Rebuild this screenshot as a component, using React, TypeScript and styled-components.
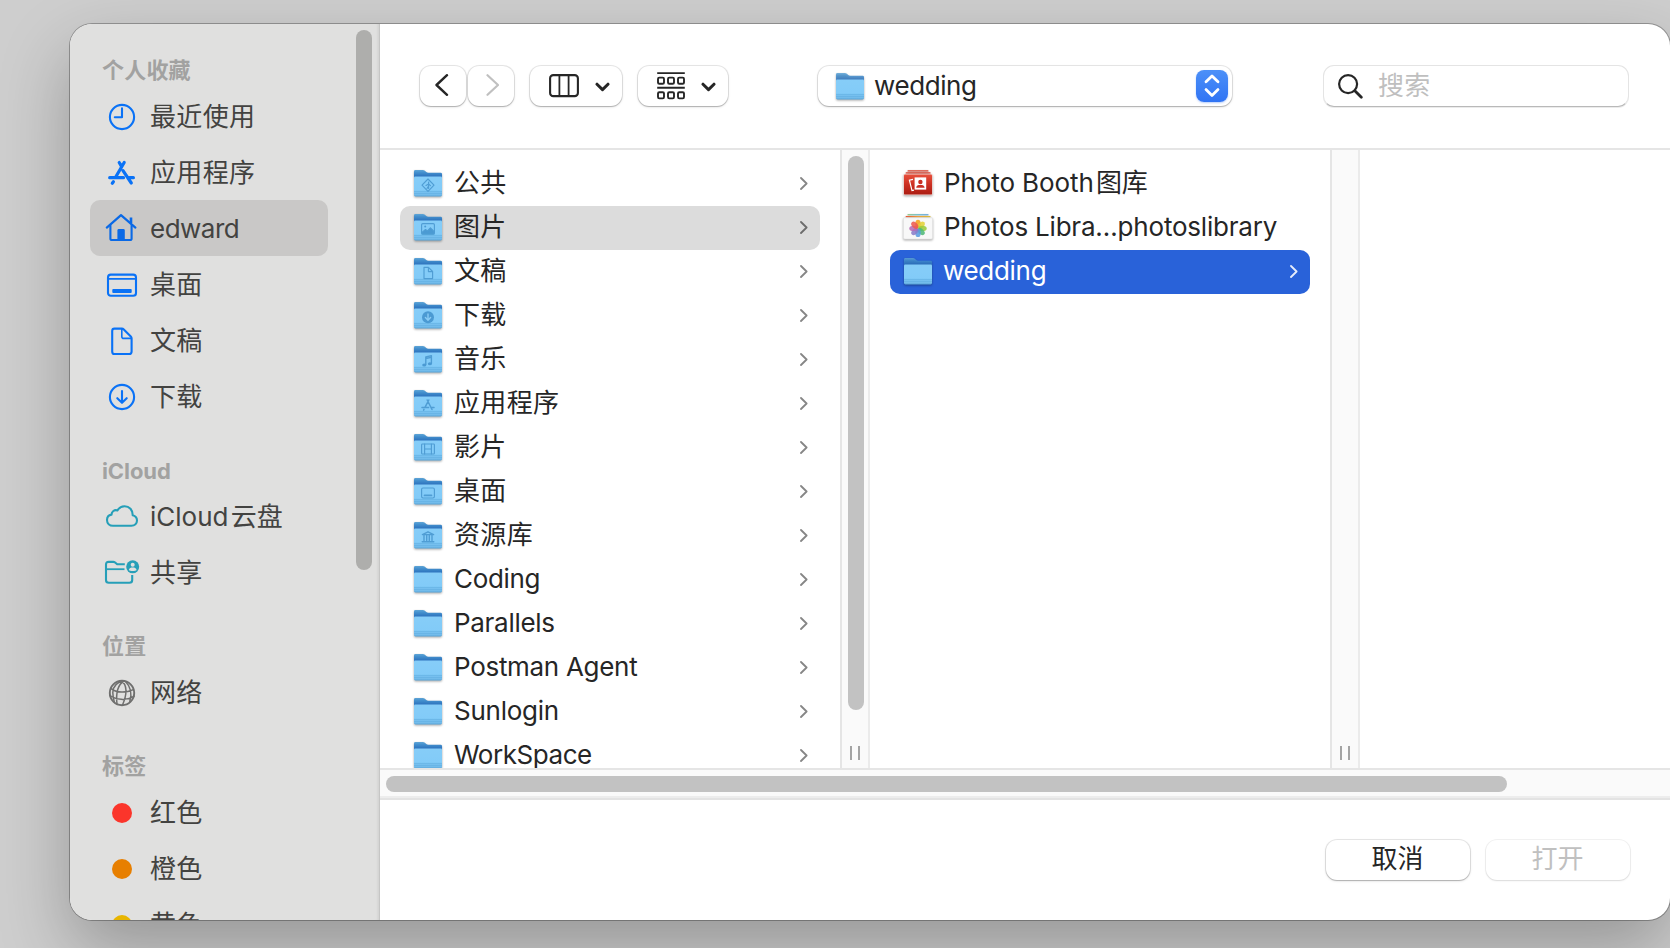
import React from "react";
import styled, { createGlobalStyle } from "styled-components";

const GlobalStyle = createGlobalStyle`
  * { box-sizing: border-box; }
  html, body { margin: 0; padding: 0; height: 948px; overflow: hidden; }
  body {
    background: #cecece;
    font-family: Inter, "Noto Sans CJK SC", sans-serif;
    font-size: 26px;
    color: #262626;
  }
  svg { display: block; flex: none; }
`;

const Desktop = styled.div`
  width: 1670px;
  height: 948px;
  padding: 24px 0 0 70px;
  overflow: hidden;
`;

const Window = styled.div`
  width: 1600px;
  height: 896px;
  display: flex;
  border-radius: 22px;
  overflow: hidden;
  background: #fff;
  box-shadow: 0 0 0 1px rgba(0, 0, 0, 0.28), 0 30px 70px rgba(0, 0, 0, 0.27);
`;

const Sidebar = styled.aside`
  width: 310px;
  flex: none;
  display: flex;
  background: #e0e0df;
  border-right: 1px solid #c6c6c5;
  box-shadow: inset -3px 0 3px -2px rgba(0, 0, 0, 0.08);
`;

const SidebarList = styled.nav`
  width: 286px;
  padding: 0 28px 0 20px;
  overflow: hidden;
`;

const GroupTitle = styled.div<{ $drop?: number }>`
  height: 64px;
  padding: ${(p) => 32 + (p.$drop ?? 0)}px 0 0 12px;
  font-size: 22px;
  line-height: 28px;
  font-weight: 700;
  letter-spacing: ${(p) => (p.$drop ? "-0.1px" : "0.2px")};
  color: #a2a2a1;
  white-space: nowrap;
`;

const SidebarRow = styled.div<{ $active?: boolean }>`
  height: 56px;
  padding: 2px 0 0 14px;
  display: flex;
  align-items: center;
  gap: 10px;
  border-radius: 10px;
  background: ${(p) => (p.$active ? "#c9c8c7" : "transparent")};
  color: #434341;
  white-space: nowrap;
`;

const IconCell = styled.span<{ $color: string }>`
  width: 36px;
  height: 36px;
  color: ${(p) => p.$color};
`;

const TagDot = styled.span<{ $color: string }>`
  width: 20px;
  height: 20px;
  margin: 0 8px;
  border-radius: 50%;
  background: ${(p) => p.$color};
`;

const Label = styled.span<{ $track?: number; $lift?: number }>`
  line-height: 36px;
  white-space: nowrap;
  letter-spacing: ${(p) => p.$track ?? 0.35}px;
  margin-bottom: ${(p) => p.$lift ?? 0}px;
`;

const SidebarThumb = styled.div`
  width: 16px;
  height: 540px;
  margin-top: 6px;
  border-radius: 8px;
  background: #aeaeac;
`;

const Main = styled.main`
  flex: 1;
  min-width: 0;
  display: flex;
  flex-direction: column;
`;

const Toolbar = styled.header`
  height: 126px;
  flex: none;
  padding: 42px 39px 0 40px;
  display: flex;
  align-items: flex-start;
  border-bottom: 2px solid #e5e5e5;
`;

const raised = `
  height: 40px;
  display: flex;
  align-items: center;
  border-radius: 11px;
  background: #fff;
  box-shadow: 0 0 0 1px rgba(0, 0, 0, 0.09), 0 1px 1px rgba(0, 0, 0, 0.16), 0 1px 3px rgba(0, 0, 0, 0.12);
`;

const ToolButton = styled.button<{ $width: number; $after: number }>`
  ${raised}
  border: 0;
  padding: 0 3px 2px 0;
  justify-content: center;
  width: ${(p) => p.$width}px;
  margin-right: ${(p) => p.$after}px;
`;

const ForwardButton = styled(ToolButton)`
  padding: 0 0 2px 1px;
`;

const MenuButton = styled(ToolButton)`
  justify-content: space-between;
  padding: 0 12px 0 19px;
`;

const PathPopup = styled.div`
  ${raised}
  width: 414px;
  margin: 0 91px 0 90px;
  padding: 0 4px 0 18px;
`;

const PopupLabel = styled(Label)`
  flex: 1;
  margin-left: 10px;
`;

const Stepper = styled.span`
  width: 32px;
  height: 32px;
  display: grid;
  place-items: center;
  border-radius: 8px;
  background: linear-gradient(#4c90f8, #3074f4);
  box-shadow: 0 1px 2px rgba(48, 116, 244, 0.35);
`;

const SearchField = styled.div`
  width: 306px;
  height: 42px;
  margin-top: -1px;
  padding-left: 14px;
  display: flex;
  align-items: center;
  gap: 15px;
  border-radius: 11px;
  border: 1px solid #e4e4e4;
  border-bottom-color: #b9b9b9;
  box-shadow: 0 1px 0 rgba(0, 0, 0, 0.08);
  color: #bfbfbf;
`;

const Browser = styled.section`
  height: 618px;
  flex: none;
  display: flex;
  overflow: hidden;
`;

const Column = styled.div`
  width: 460px;
  flex: none;
  padding: 12px 20px 0;
`;

const FileRow = styled.div<{ $state?: "open" | "selected"; $inset: number }>`
  height: 44px;
  padding: 0 12px 2px ${(p) => p.$inset}px;
  display: flex;
  align-items: center;
  border-radius: 10px;
  background: ${(p) =>
    p.$state === "selected" ? "#2962d9" : p.$state === "open" ? "#dcdcdc" : "transparent"};
  color: ${(p) => (p.$state === "selected" ? "#fff" : "inherit")};
`;

const FileName = styled(Label)<{ $gap?: number }>`
  flex: 1;
  margin-left: ${(p) => p.$gap ?? 12}px;
`;

const Gutter = styled.div`
  width: 30px;
  flex: none;
  display: flex;
  flex-direction: column;
  align-items: center;
  justify-content: space-between;
  padding: 6px 0 8px;
  background: #fafafa;
  border-left: 2px solid #e5e5e5;
  border-right: 2px solid #ebebeb;
`;

const GutterThumb = styled.div<{ $visible: boolean }>`
  width: 16px;
  height: 554px;
  margin-left: 2px;
  border-radius: 8px;
  background: ${(p) => (p.$visible ? "#c2c2c2" : "transparent")};
`;

const Grip = styled.div`
  width: 10px;
  height: 14px;
  border: solid #a3a3a3;
  border-width: 0 2px;
`;

const ScrollTrack = styled.div`
  height: 32px;
  flex: none;
  padding: 6px 0 0 6px;
  background: #fafafa;
  border-top: 2px solid #e5e5e5;
  border-bottom: 2px solid #e3e3e3;
  box-shadow: inset 0 -2px 0 #ededed;
`;

const ScrollThumb = styled.div`
  width: 1121px;
  height: 16px;
  border-radius: 8px;
  background: #c2c2c2;
`;

const Footer = styled.footer`
  flex: 1;
  padding: 40px 40px 0;
  display: flex;
  justify-content: flex-end;
  gap: 16px;
`;

const DialogButton = styled.button<{ $dim?: boolean }>`
  ${raised}
  width: 144px;
  border: 0;
  padding: 0 1px 2px 0;
  justify-content: center;
  font: inherit;
  line-height: 36px;
  color: ${(p) => (p.$dim ? "#c0c0c0" : "#262626")};
  ${(p) => p.$dim && "box-shadow: 0 0 0 1px rgba(0,0,0,.05), 0 1px 2px rgba(0,0,0,.1);"}
`;

type IconName =
  | "clock" | "apps" | "home" | "desktop" | "doc" | "down" | "cloud" | "shared" | "globe";

const sidebarGlyphs: Record<IconName, React.ReactNode> = {
  clock: (
    <>
      <circle cx="18" cy="18" r="12.1" />
      <path d="M18 9.4V18.2H10.8" />
    </>
  ),
  apps: (
    <g strokeWidth="3.2">
      <path d="M20.2 7.5L12 21.5M15.2 7.5L17.2 10.8M19 15.6L27.3 28M5.7 22.7H19.5M25.5 22.7H29.4M9.4 26.8L8.3 28.2" />
    </g>
  ),
  home: (
    <>
      <path d="M2.8 16.6L17 4.2L31.4 16.6" strokeWidth="2.2" />
      <path d="M6.4 14.5V27.4Q6.4 29 8 29H26Q27.6 29 27.6 27.4V14.5" />
      <path d="M27 6.4V12" strokeWidth="2.6" strokeLinecap="butt" />
      <path d="M13.4 29V19.4Q13.4 18 14.8 18H19.4Q20.8 18 20.8 19.4V29Z" fill="currentColor" stroke="none" />
    </>
  ),
  desktop: (
    <>
      <rect x="4" y="7.6" width="28" height="21.2" rx="2.8" />
      <path d="M4 11.8H32" strokeWidth="1.8" />
      <rect x="8.3" y="22" width="19.4" height="4" rx="0.9" fill="currentColor" stroke="none" />
    </>
  ),
  doc: (
    <>
      <path d="M10.4 5.6H17.8Q19 5.6 19.8 6.4L26.8 13.4Q27.6 14.2 27.6 15.4V28.4Q27.6 31 25 31H10.4Q8.2 31 8.2 28.4V8Q8.2 5.6 10.4 5.6Z" />
      <path d="M17.8 6V13.4Q17.8 15.4 19.8 15.4H27.2" strokeWidth="1.6" />
    </>
  ),
  down: (
    <>
      <circle cx="18" cy="18" r="12.1" />
      <path d="M18 12V23.6M13.3 19.2L18 23.8L22.7 19.2" />
    </>
  ),
  cloud: (
    <path d="M9 26.8H27.4C30.7 26.8 33 24.5 33 21.6C33 18.8 31 16.8 28.7 16.2C28.8 11 25.3 7.2 20.6 7.2C17.3 7.2 14.8 9 13.4 11.4C10.3 10.4 7.6 12.6 7.5 15.6C4.8 16 3 18.3 3 21C3 24.3 5.6 26.8 9 26.8Z" />
  ),
  shared: (
    <>
      <path d="M20.8 9.3H13.2L10.8 7.3Q10.2 6.9 9.4 6.9H4.6Q2 6.9 2 9.5V25Q2 27.8 4.8 27.8H25.4Q28.2 27.8 28.2 25V20" strokeLinecap="butt" />
      <path d="M2 14.2H20.5" strokeWidth="1.8" strokeLinecap="butt" />
      <circle cx="28.7" cy="11.8" r="6.5" fill="currentColor" stroke="none" />
      <circle cx="28.7" cy="9.7" r="2" fill="#e0e0df" stroke="none" />
      <path d="M24.8 15C25.2 13 27 12.6 28.7 12.6C30.4 12.6 32.2 13 32.6 15C31.4 16.4 26 16.4 24.8 15Z" fill="#e0e0df" stroke="none" />
    </>
  ),
  globe: (
    <g strokeWidth="1.6">
      <circle cx="18" cy="18" r="12.2" strokeWidth="1.9" />
      <path d="M20 6C15 9 11.5 16 13 29.2M17 6C20.5 8 21.5 10 22 15.5Q22 22 18.5 30M21.5 6.5C27 12 28 19 25.8 26.5M19 6C12 7.5 9 12 8.8 17.5Q8.8 21.5 10.4 27.4M7.5 13.8C13 18 22 18 29.4 14.6M6 20.5C12 25 22 26 30 21.4" strokeWidth="1.5" />
    </g>
  ),
};

const SidebarIcon = ({ name }: { name: IconName }) => (
  <svg width="36" height="36" viewBox="0 0 36 36" fill="none" stroke="currentColor" strokeWidth="2.1" strokeLinecap="round" strokeLinejoin="round" overflow="visible">
    {sidebarGlyphs[name]}
  </svg>
);

type Badge =
  | "public" | "pictures" | "documents" | "downloads" | "music" | "apps" | "movies" | "desktop" | "library";

const folderBadges: Record<Badge, React.ReactNode> = {
  public: (
    <>
      <path d="M14 9L20 15.2L14 21.4L8 15.2Z" />
      <path d="M14.6 12V18.5M14.6 14L12 15.5M14.6 14L16.5 15.6M14.6 16L13 18.5" />
    </>
  ),
  pictures: (
    <>
      <rect x="7.6" y="9.6" width="12.8" height="10.6" rx="1.2" />
      <path d="M8 18.5L11.5 15.5L13.5 17L16.4 13.8L20 17.5V20H8Z" fill="#4b9ad3" />
      <circle cx="11.2" cy="12.6" r="1" fill="#4b9ad3" stroke="none" />
    </>
  ),
  documents: (
    <>
      <path d="M10 9.4H14.5L18.6 13.5V20.6H10Z" />
      <path d="M14.4 9.6V13.6H18.4" />
    </>
  ),
  downloads: (
    <>
      <circle cx="14" cy="15.2" r="6" fill="#4b9ad3" stroke="none" />
      <path d="M14 12V18M11.4 15.6L14 18.2L16.6 15.6" stroke="#8accf5" strokeWidth="1.4" />
    </>
  ),
  music: (
    <>
      <path d="M11.8 18.8V11L17.4 9.6V17.5M11.8 12.6L17.4 11.2" strokeWidth="1.4" />
      <ellipse cx="10.2" cy="19" rx="2" ry="1.5" fill="#4b9ad3" stroke="none" />
      <ellipse cx="15.9" cy="17.8" rx="2" ry="1.5" fill="#4b9ad3" stroke="none" />
    </>
  ),
  apps: <path d="M14.8 10L11 17.4M13.2 10L18 19.5M8 17.6H14.6M17.2 17.6H20M10 19.4L9.6 20.2" strokeWidth="1.5" />,
  movies: (
    <>
      <rect x="7.6" y="10" width="12.8" height="10" rx="0.8" />
      <path d="M10.6 10V20M17.4 10V20M10.6 15H17.4" />
    </>
  ),
  desktop: (
    <>
      <rect x="7.6" y="10" width="12.8" height="10" rx="1.4" />
      <path d="M10.5 17.4H17.5" strokeWidth="1.7" />
    </>
  ),
  library: (
    <path d="M8.4 12.6L14 9.8L19.6 12.6ZM10 13.4V18.6M12.7 13.4V18.6M15.3 13.4V18.6M18 13.4V18.6M8.2 19.8H19.8" strokeWidth="1.4" />
  ),
};

const FolderArt = styled.svg`
  filter: drop-shadow(0 1px 0.8px rgba(0, 0, 0, 0.35));
`;

const Folder = ({ badge, soft }: { badge?: Badge; soft?: boolean }) => (
  <FolderArt width="28" height="27" viewBox="0 0 28 27" fill="none">
    <defs>
      <linearGradient id="folderBack" x1="0" y1="0" x2="0" y2="7" gradientUnits="userSpaceOnUse">
        <stop offset="0" stopColor="#5fa5d6" />
        <stop offset="0.35" stopColor="#4490ce" />
        <stop offset="1" stopColor="#2a6fbb" />
      </linearGradient>
      <linearGradient id="folderFront" x1="0" y1="6" x2="0" y2="26" gradientUnits="userSpaceOnUse">
        <stop offset="0" stopColor="#86cdf8" />
        <stop offset="0.72" stopColor="#82cbf8" />
        <stop offset="0.8" stopColor="#79c3f1" />
        <stop offset="0.94" stopColor="#72bbea" />
        <stop offset="1" stopColor="#5ea9dc" />
      </linearGradient>
    </defs>
    <path d="M0 1.4Q0 0 1.4 0H8.8Q10 0 10.9 0.8L12.2 2Q13 2.7 14.2 2.7H26.6Q28 2.7 28 4.1V12H0Z" fill="url(#folderBack)" opacity={soft ? 0.85 : 1} />
    <path d="M0 7.4Q0 6.4 1 6.4H27Q28 6.4 28 7.4V25Q28 26.4 26.6 26.4H1.4Q0 26.4 0 25Z" fill="url(#folderFront)" />
    <path d="M0 21.4H28M0 23.4H28" stroke="#5fabdf" strokeWidth="0.6" />
    {badge && (
      <g stroke="#4f9dd4" strokeWidth="1.15" strokeLinecap="round" strokeLinejoin="round">
        {folderBadges[badge]}
      </g>
    )}
  </FolderArt>
);

const BundleArt = styled.svg`
  filter: drop-shadow(0 1px 1px rgba(0, 0, 0, 0.35));
`;

const PhotoBoothIcon = () => (
  <BundleArt width="30" height="26" viewBox="0 0 30 26">
    <defs>
      <linearGradient id="boothBody" x1="0" y1="0" x2="0" y2="1">
        <stop offset="0" stopColor="#e8503c" />
        <stop offset="0.5" stopColor="#cc3022" />
        <stop offset="1" stopColor="#ab1d13" />
      </linearGradient>
    </defs>
    <rect x="4.5" y="0.2" width="21" height="1.2" rx="0.5" fill="#d9432f" />
    <rect x="2.6" y="2.2" width="25" height="1.2" rx="0.5" fill="#dc4633" />
    <rect x="0.4" y="3.9" width="29.2" height="21.3" rx="1.4" fill="#f3d4cf" />
    <rect x="1" y="4.4" width="28" height="20.2" rx="1.2" fill="url(#boothBody)" />
    <path d="M10 9.4L6.4 10.2L9 20.6L11 20.1" fill="none" stroke="#fff" strokeWidth="1.2" />
    <rect x="11.6" y="7.4" width="11.6" height="12.2" fill="#fff" />
    <circle cx="17.4" cy="12" r="2.2" fill="#c92f22" />
    <path d="M13.2 17.8C13.2 15.4 15 14.9 17.4 14.9C19.8 14.9 21.6 15.4 21.6 17.8Z" fill="#c92f22" />
  </BundleArt>
);

const petals = ["#f59f1e", "#e3d238", "#9bcb3c", "#4fb879", "#5a9be0", "#8a7cc8", "#b66bb5", "#ee5b50"];

const PhotosLibraryIcon = () => (
  <BundleArt width="30" height="26" viewBox="0 0 30 26">
    <defs>
      <linearGradient id="stackTop">
        <stop offset="0" stopColor="#7cc06a" />
        <stop offset="0.5" stopColor="#55b2c4" />
        <stop offset="1" stopColor="#4e9ad8" />
      </linearGradient>
      <linearGradient id="stackMid">
        <stop offset="0" stopColor="#e2553a" />
        <stop offset="0.5" stopColor="#efa23a" />
        <stop offset="1" stopColor="#d8bd38" />
      </linearGradient>
    </defs>
    <rect x="4.5" y="0.2" width="21" height="1.1" rx="0.4" fill="url(#stackTop)" />
    <rect x="2.6" y="2.1" width="25" height="1.1" rx="0.4" fill="url(#stackMid)" />
    <rect x="0.4" y="3.7" width="29.2" height="21.4" rx="1.4" fill="#f8f8f8" stroke="#e1e1e1" strokeWidth="0.6" />
    {petals.map((color, i) => (
      <ellipse key={color} cx="15" cy="9.9" rx="2.7" ry="4.2" fill={color} opacity="0.88" transform={`rotate(${i * 45} 15 14.4)`} />
    ))}
  </BundleArt>
);

interface ChevronProps {
  points: string;
  width: number;
  height: number;
  weight: number;
  color?: string;
}

const Chevron = ({ points, width, height, weight, color = "#262626" }: ChevronProps) => (
  <svg width={width} height={height} fill="none" stroke={color} strokeWidth={weight} strokeLinecap="round" strokeLinejoin="round">
    <path d={points} />
  </svg>
);

const MenuChevron = () => <Chevron points="M2 3.2L7.5 8.6L13 3.2" width={15} height={11} weight={3} />;

const ColumnsIcon = () => (
  <svg width="30" height="24" viewBox="0 0 30 24" fill="none" stroke="#262626" strokeWidth="2.1">
    <rect x="1.1" y="1.1" width="27.8" height="21" rx="3.2" />
    <path d="M10.4 1.1V22.1M19.6 1.1V22.1" strokeWidth="1.8" />
  </svg>
);

const GroupIcon = () => (
  <svg width="28" height="28" viewBox="0 0 28 28" fill="none" stroke="#262626" strokeWidth="1.9">
    <path d="M0.2 1.1H27.8M0.2 15.7H27.8" />
    {[5.6, 20.2].map((y) =>
      [1, 11, 21].map((x) => <rect key={`${x}-${y}`} x={x} y={y} width="6" height="6.2" rx="1.3" />)
    )}
  </svg>
);

const SearchIcon = () => (
  <svg width="25" height="25" viewBox="0 0 25 25" fill="none" stroke="#262626" strokeLinecap="round">
    <circle cx="10.1" cy="10.1" r="9" strokeWidth="2.2" />
    <path d="M16.8 16.8L23.3 23.3" strokeWidth="2.8" />
  </svg>
);

const BLUE = "#0a72f6";
const TEAL = "#269fb8";

interface Place {
  icon?: IconName;
  dot?: string;
  color?: string;
  label: React.ReactNode;
  active?: boolean;
  track?: number;
}

interface Group {
  title: string;
  drop?: number;
  places: Place[];
}

const groups: Group[] = [
  {
    title: "个人收藏",
    places: [
      { icon: "clock", color: BLUE, label: "最近使用" },
      { icon: "apps", color: BLUE, label: "应用程序" },
      { icon: "home", color: "#0a69e6", label: "edward", active: true, track: -0.5 },
      { icon: "desktop", color: BLUE, label: "桌面" },
      { icon: "doc", color: BLUE, label: "文稿" },
      { icon: "down", color: BLUE, label: "下载" },
    ],
  },
  {
    title: "iCloud",
    drop: 1,
    places: [
      { icon: "cloud", color: TEAL, label: "iCloud\u200a云盘", track: 0 },
      { icon: "shared", color: TEAL, label: "共享" },
    ],
  },
  { title: "位置", places: [{ icon: "globe", color: "#6f6f6e", label: "网络" }] },
  {
    title: "标签",
    places: [
      { dot: "#fb352b", label: "红色" },
      { dot: "#e77f00", label: "橙色" },
      { dot: "#e8b500", label: "黄色" },
    ],
  },
];

interface Entry {
  name: string;
  badge?: Badge;
  track?: number;
  open?: boolean;
}

const folders: Entry[] = [
  { name: "公共", badge: "public" },
  { name: "图片", badge: "pictures", open: true },
  { name: "文稿", badge: "documents" },
  { name: "下载", badge: "downloads" },
  { name: "音乐", badge: "music" },
  { name: "应用程序", badge: "apps" },
  { name: "影片", badge: "movies" },
  { name: "桌面", badge: "desktop" },
  { name: "资源库", badge: "library" },
  { name: "Coding", track: -0.35 },
  { name: "Parallels", track: -0.3 },
  { name: "Postman Agent", track: -0.3 },
  { name: "Sunlogin", track: -0.25 },
  { name: "WorkSpace", track: -0.45 },
];

const RowChevron = ({ color = "#868686" }: { color?: string }) => (
  <Chevron points="M1 1L6.6 6.5L1 12" width={8} height={13} weight={1.8} color={color} />
);

export default function App() {
  return (
    <>
      <GlobalStyle />
      <Desktop>
        <Window>
          <Sidebar>
            <SidebarList>
              {groups.map((group) => (
                <React.Fragment key={group.title}>
                  <GroupTitle $drop={group.drop}>{group.title}</GroupTitle>
                  {group.places.map((place, i) => (
                    <SidebarRow key={i} $active={place.active}>
                      {place.icon ? (
                        <IconCell $color={place.color ?? BLUE}>
                          <SidebarIcon name={place.icon} />
                        </IconCell>
                      ) : (
                        <TagDot $color={place.dot ?? BLUE} />
                      )}
                      <Label $track={place.track}>{place.label}</Label>
                    </SidebarRow>
                  ))}
                </React.Fragment>
              ))}
            </SidebarList>
            <SidebarThumb />
          </Sidebar>
          <Main>
            <Toolbar>
              <ToolButton $width={46} $after={2} aria-label="back">
                <Chevron points="M12 1.2L1.5 11L12 20.8" width={14} height={22} weight={2.4} />
              </ToolButton>
              <ForwardButton $width={46} $after={16} aria-label="forward">
                <Chevron points="M2.5 1.2L13 11L2.5 20.8" width={14} height={22} weight={2.2} color="#c0c0c0" />
              </ForwardButton>
              <MenuButton $width={92} $after={16} aria-label="view">
                <ColumnsIcon />
                <MenuChevron />
              </MenuButton>
              <MenuButton $width={90} $after={0} aria-label="group">
                <GroupIcon />
                <MenuChevron />
              </MenuButton>
              <PathPopup>
                <Folder soft />
                <PopupLabel $track={-0.4} $lift={1}>wedding</PopupLabel>
                <Stepper>
                  <Chevron points="M2 7.8L8 2L14 7.8M2 15.6L8 21.4L14 15.6" width={16} height={24} weight={2.8} color="#fff" />
                </Stepper>
              </PathPopup>
              <SearchField>
                <SearchIcon />
                <Label>搜索</Label>
              </SearchField>
            </Toolbar>
            <Browser>
              <Column>
                {folders.map((f) => (
                  <FileRow key={f.name} $inset={14} $state={f.open ? "open" : undefined}>
                    <Folder badge={f.badge} />
                    <FileName $track={f.track}>{f.name}</FileName>
                    <RowChevron color={f.open ? "#6c6c6c" : undefined} />
                  </FileRow>
                ))}
              </Column>
              <Gutter>
                <GutterThumb $visible />
                <Grip />
              </Gutter>
              <Column>
                <FileRow $inset={13}>
                  <PhotoBoothIcon />
                  <FileName $track={-0.1} $gap={11}>Photo Booth{"\u200a"}图库</FileName>
                </FileRow>
                <FileRow $inset={13}>
                  <PhotosLibraryIcon />
                  <FileName $track={-0.2} $gap={11}>Photos Libra…photoslibrary</FileName>
                </FileRow>
                <FileRow $inset={14} $state="selected">
                  <Folder soft />
                  <FileName $track={-0.3} $gap={11}>wedding</FileName>
                  <RowChevron color="#e6edfb" />
                </FileRow>
              </Column>
              <Gutter>
                <GutterThumb $visible={false} />
                <Grip />
              </Gutter>
            </Browser>
            <ScrollTrack>
              <ScrollThumb />
            </ScrollTrack>
            <Footer>
              <DialogButton>取消</DialogButton>
              <DialogButton $dim>打开</DialogButton>
            </Footer>
          </Main>
        </Window>
      </Desktop>
    </>
  );
}
